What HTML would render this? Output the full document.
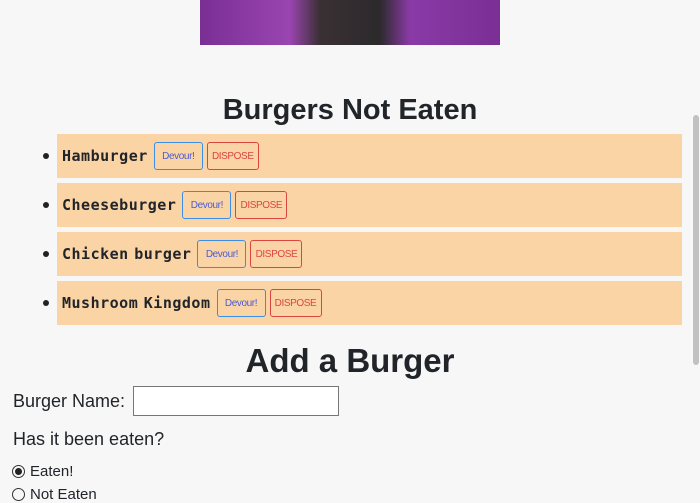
<!DOCTYPE html>
<html><head><meta charset="utf-8"><style>
*{box-sizing:border-box}
body{margin:0;width:700px;height:500px;overflow:hidden;background:#f7f7f7;font-family:"Liberation Sans",sans-serif;color:#212529;position:relative}
.img{position:absolute;left:200px;top:0;width:300px;height:45px;background:linear-gradient(90deg,#7a2f95,#9a45b0 30%,#3a3034 40%,#2c2a2c 60%,#8a3aa6 70%,#7a2f95)}
h2{position:absolute;left:0;width:700px;text-align:center;margin:0;font-weight:bold}
.h1{top:94px;font-size:29px}
.h2{top:342px;font-size:33px}
.row{position:absolute;left:57px;width:625px;height:44px;background:#fbd4a6;display:flex;align-items:center;padding-left:5px}
.dot{position:absolute;left:-14px;top:19px;width:6px;height:6px;border-radius:50%;background:#222}
.name{font-family:"DejaVu Sans Mono",monospace;font-size:15px;font-weight:bold;letter-spacing:0.5px;margin-right:6px;word-spacing:-4px}
.b{border:1px solid;border-radius:3px;height:28px;display:inline-flex;align-items:center;justify-content:center;font-size:10px;margin-right:4px;letter-spacing:-0.4px}
.d{border-color:#3b8ee6;color:#4a5bd0;width:49px}
.x{border-color:#d9463f;color:#d9463f;width:52px}
.sb{position:absolute;right:1px;top:115px;width:6px;height:250px;background:#c1c1c1;border-radius:3px}
.t{position:absolute;left:13px;font-size:18px}
input[type=text]{position:absolute;left:133px;top:386px;width:206px;height:30px;border:1px solid #767676;background:#fff}
.r{position:absolute;left:12px;font-size:15px;display:flex;align-items:center}
.c{width:13px;height:13px;border:1px solid #333;border-radius:50%;margin-right:5px;display:flex;align-items:center;justify-content:center}
.c i{width:7px;height:7px;border-radius:50%;background:#222}
</style></head><body>
<div class="img"></div>
<h2 class="h1">Burgers Not Eaten</h2>
<div class="row" style="top:134px"><span class="dot"></span><span class="name">Hamburger</span><span class="b d">Devour!</span><span class="b x">DISPOSE</span></div>
<div class="row" style="top:183px"><span class="dot"></span><span class="name">Cheeseburger</span><span class="b d">Devour!</span><span class="b x">DISPOSE</span></div>
<div class="row" style="top:232px"><span class="dot"></span><span class="name">Chicken burger</span><span class="b d">Devour!</span><span class="b x">DISPOSE</span></div>
<div class="row" style="top:281px"><span class="dot"></span><span class="name">Mushroom Kingdom</span><span class="b d">Devour!</span><span class="b x">DISPOSE</span></div>
<h2 class="h2">Add a Burger</h2>
<div class="t" style="top:391px">Burger Name:</div>
<input type="text">
<div class="t" style="top:429px">Has it been eaten?</div>
<div class="r" style="top:463px"><span class="c"><i></i></span>Eaten!</div>
<div class="r" style="top:486px"><span class="c"></span>Not Eaten</div>
<div class="sb"></div>
</body></html>
